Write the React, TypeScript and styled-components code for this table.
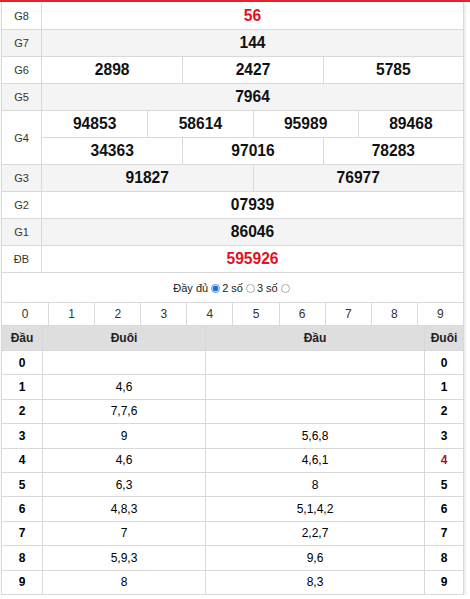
import React from "react";
import styled, { createGlobalStyle } from "styled-components";

const GlobalStyle = createGlobalStyle`
  html, body { margin: 0; padding: 0; background: #fff; }
  body { font-family: "Liberation Sans", Arial, sans-serif; color: #222; }
  *, *::before, *::after { box-sizing: border-box; }
`;

const LINE = "#d9d9d9";

const TopBar = styled.div`
  height: 2px;
  background: #e5262b;
`;

const Panel = styled.div`
  width: 463px;
  margin-left: 1px;
  padding-top: 1px;
  border-left: 1px solid ${LINE};
  border-right: 1px solid ${LINE};
  box-shadow: 1px 1px 3px rgba(0, 0, 0, 0.12);
`;

const PrizeRow = styled.div<{ $alt?: boolean }>`
  display: grid;
  grid-template-columns: 40px 1fr;
  background: ${(p) => (p.$alt ? "#f4f4f4" : "#fff")};
  border-bottom: 1px solid ${LINE};
`;

const PrizeLabel = styled.div`
  display: flex;
  align-items: center;
  justify-content: center;
  border-right: 1px solid ${LINE};
  font-size: 11px;
  color: #333;
`;

const NumberStack = styled.div`
  display: flex;
  flex-direction: column;
`;

const NumberLine = styled.div<{ $cols: number; $divided?: boolean }>`
  display: grid;
  grid-template-columns: repeat(${(p) => p.$cols}, 1fr);
  height: ${(p) => (p.$divided ? 27 : 26)}px;
  border-bottom: ${(p) => (p.$divided ? `1px solid ${LINE}` : "none")};
`;

const NumberCell = styled.div<{ $red?: boolean }>`
  display: flex;
  align-items: center;
  justify-content: center;
  font-size: 15.6px;
  font-weight: bold;
  color: ${(p) => (p.$red ? "#e3101f" : "#111")};
  & + & {
    border-left: 1px solid ${LINE};
  }
`;

const ModeBar = styled.div`
  height: 30px;
  display: flex;
  align-items: center;
  justify-content: center;
  font-size: 11px;
  color: #222;
  border-bottom: 1px solid ${LINE};
  padding-top: 1px;
`;

const ModeLabel = styled.label`
  display: inline-flex;
  align-items: center;
`;

const RadioInput = styled.input`
  appearance: none;
  -webkit-appearance: none;
  width: 9px;
  height: 9px;
  margin: 0 2px 0 3px;
  border-radius: 50%;
  border: 1px solid #aaa;
  background: #fff;
  &:checked {
    border-color: #4a94e4;
    background: radial-gradient(circle, #1a6fd8 0 2.6px, #fff 3.2px);
  }
`;

const DigitBar = styled.div`
  display: grid;
  grid-template-columns: repeat(10, 1fr);
  height: 23px;
  border-bottom: 1px solid ${LINE};
`;

const DigitCell = styled.div`
  display: flex;
  align-items: center;
  justify-content: center;
  font-size: 12px;
  color: #333;
  & + & {
    border-left: 1px solid ${LINE};
  }
`;

const LotoRow = styled.div<{ $head?: boolean }>`
  display: grid;
  grid-template-columns: 40px 163px 219px 39px;
  height: ${(p) => (p.$head ? "25px" : "24.4px")};
  background: ${(p) => (p.$head ? "#dedede" : "#fff")};
  border-bottom: 1px solid ${LINE};
`;

const LotoCell = styled.div<{ $bold?: boolean; $head?: boolean; $red?: boolean }>`
  display: flex;
  align-items: center;
  justify-content: center;
  font-size: 12px;
  font-weight: ${(p) => (p.$bold || p.$head ? "bold" : "normal")};
  color: ${(p) => (p.$red ? "#a8141c" : p.$head ? "#222" : "#000")};
  & + & {
    border-left: 1px solid ${LINE};
  }
`;

type Prize = { label: string; lines: string[][]; red?: boolean };

const prizes: Prize[] = [
  { label: "G8", lines: [["56"]], red: true },
  { label: "G7", lines: [["144"]] },
  { label: "G6", lines: [["2898", "2427", "5785"]] },
  { label: "G5", lines: [["7964"]] },
  { label: "G4", lines: [["94853", "58614", "95989", "89468"], ["34363", "97016", "78283"]] },
  { label: "G3", lines: [["91827", "76977"]] },
  { label: "G2", lines: [["07939"]] },
  { label: "G1", lines: [["86046"]] },
  { label: "ĐB", lines: [["595926"]], red: true },
];

const loto: [string, string][] = [
  ["", ""],
  ["4,6", ""],
  ["7,7,6", ""],
  ["9", "5,6,8"],
  ["4,6", "4,6,1"],
  ["6,3", "8"],
  ["4,8,3", "5,1,4,2"],
  ["7", "2,2,7"],
  ["5,9,3", "9,6"],
  ["8", "8,3"],
];

export default function App() {
  return (
    <>
      <GlobalStyle />
      <TopBar />
      <Panel>
        {prizes.map((p, i) => (
          <PrizeRow key={p.label} $alt={i % 2 === 1}>
            <PrizeLabel>{p.label}</PrizeLabel>
            <NumberStack>
              {p.lines.map((line, li) => (
                <NumberLine key={li} $cols={line.length} $divided={li < p.lines.length - 1}>
                  {line.map((n) => (
                    <NumberCell key={n} $red={p.red}>
                      {n}
                    </NumberCell>
                  ))}
                </NumberLine>
              ))}
            </NumberStack>
          </PrizeRow>
        ))}
        <ModeBar>
          <ModeLabel>
            Đầy đủ
            <RadioInput type="radio" name="mode" defaultChecked />
          </ModeLabel>
          <ModeLabel>
            2 số
            <RadioInput type="radio" name="mode" />
          </ModeLabel>
          <ModeLabel>
            3 số
            <RadioInput type="radio" name="mode" />
          </ModeLabel>
        </ModeBar>
        <DigitBar>
          {Array.from({ length: 10 }, (_, d) => (
            <DigitCell key={d}>{d}</DigitCell>
          ))}
        </DigitBar>
        <LotoRow $head>
          <LotoCell $head>Đầu</LotoCell>
          <LotoCell $head>Đuôi</LotoCell>
          <LotoCell $head>Đầu</LotoCell>
          <LotoCell $head>Đuôi</LotoCell>
        </LotoRow>
        {loto.map(([tail, head], d) => (
          <LotoRow key={d}>
            <LotoCell $bold>{d}</LotoCell>
            <LotoCell>{tail}</LotoCell>
            <LotoCell>{head}</LotoCell>
            <LotoCell $bold $red={d === 4}>
              {d}
            </LotoCell>
          </LotoRow>
        ))}
      </Panel>
    </>
  );
}
